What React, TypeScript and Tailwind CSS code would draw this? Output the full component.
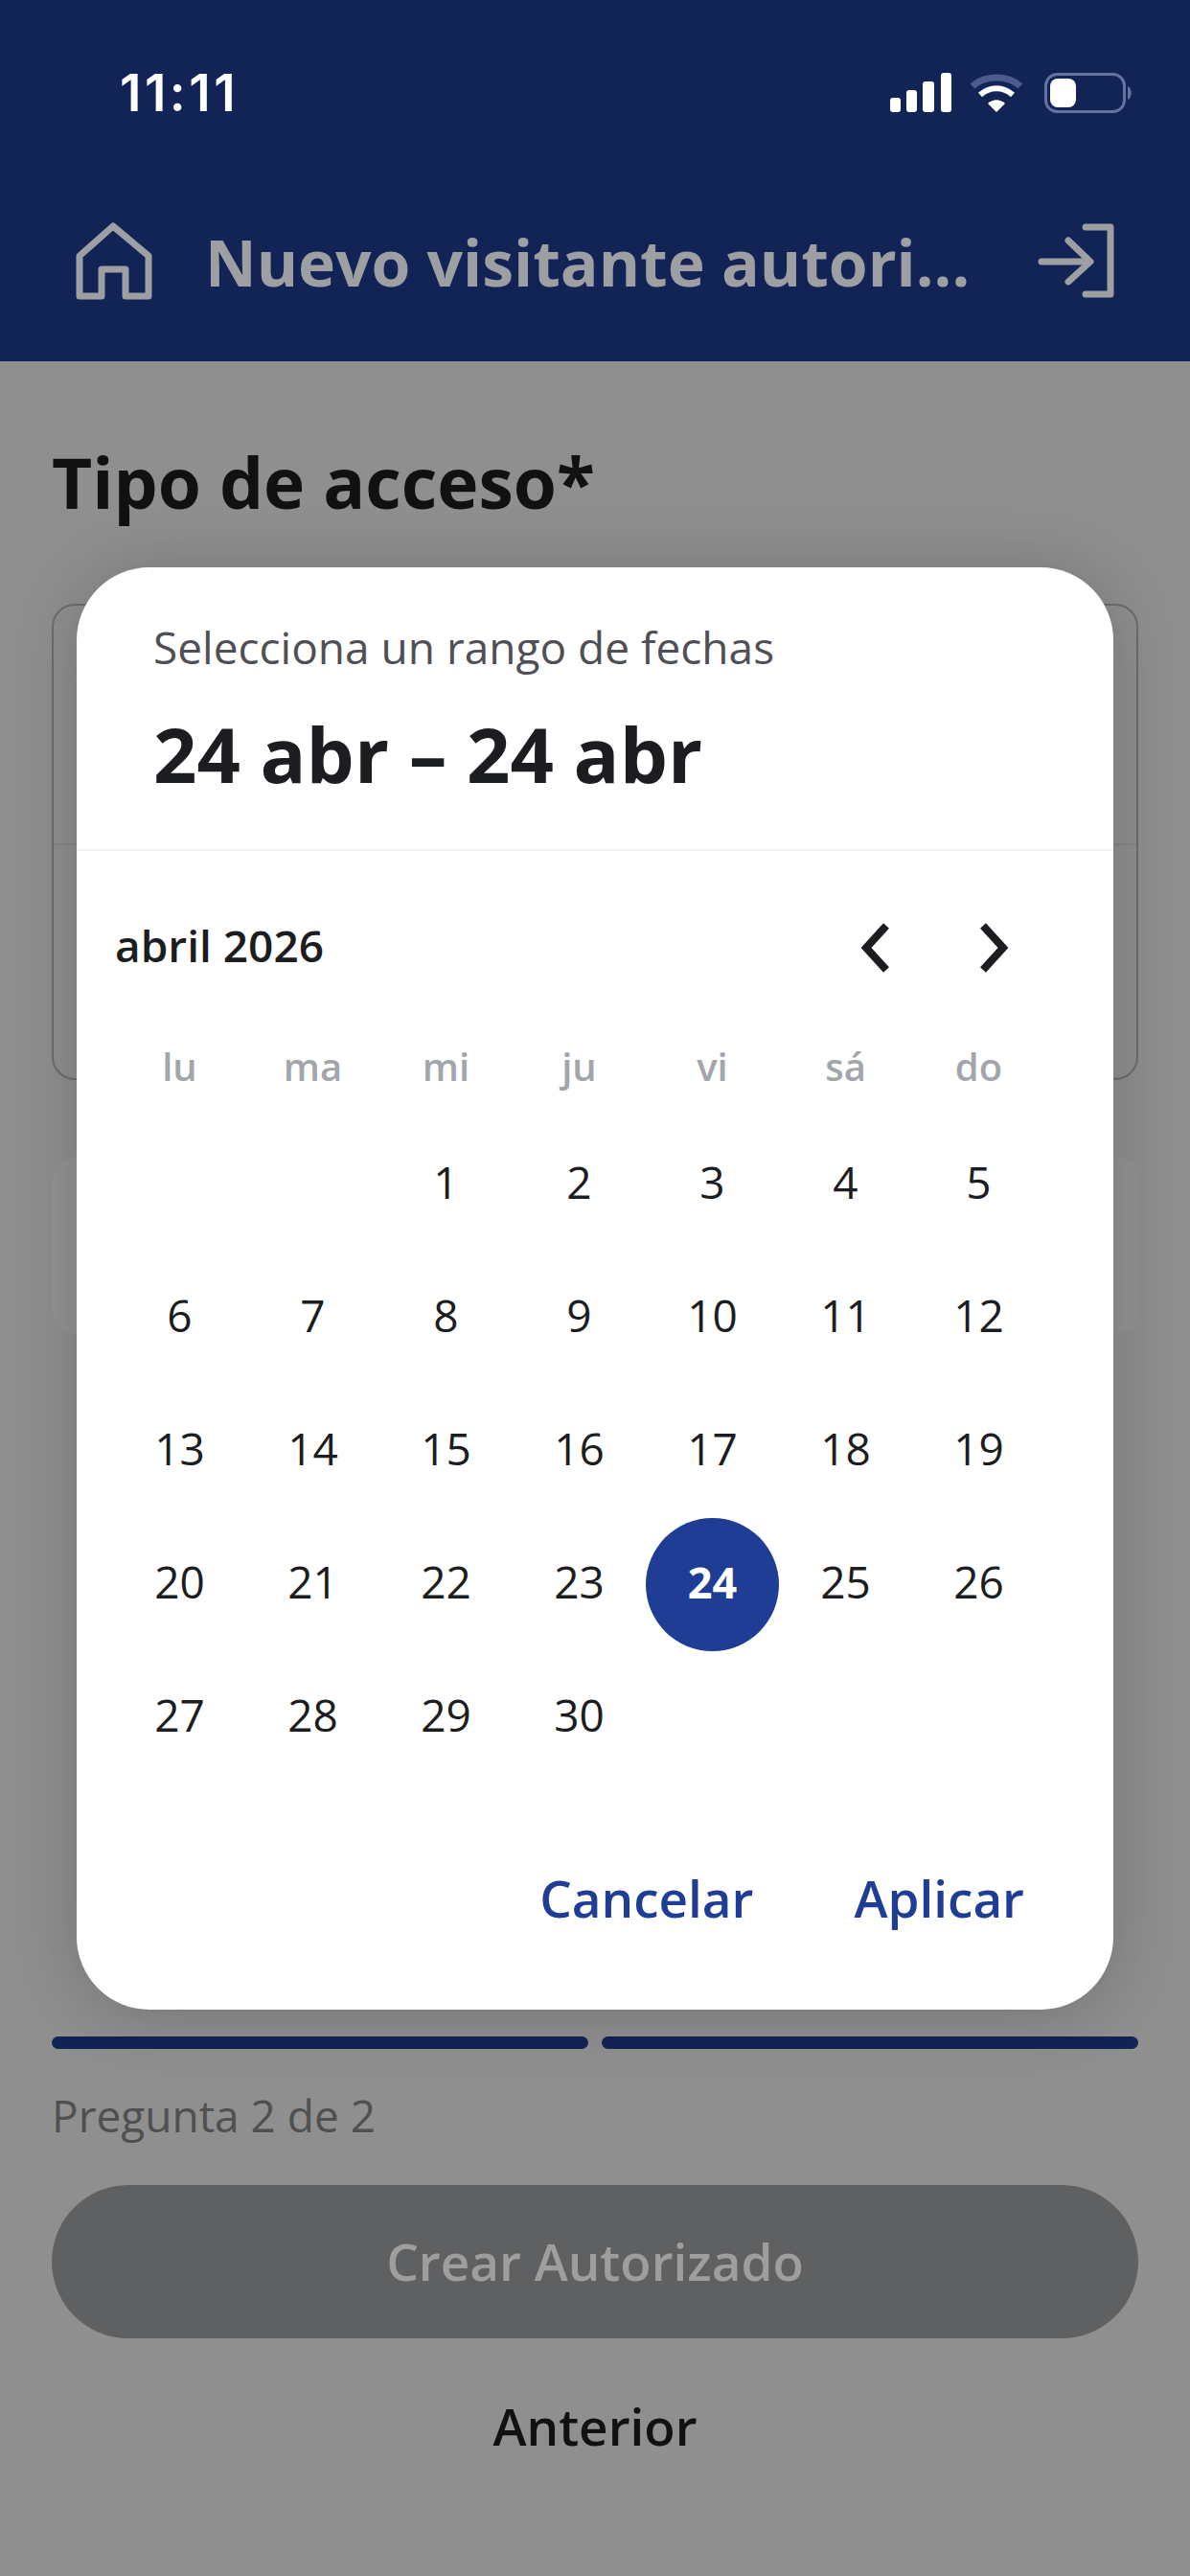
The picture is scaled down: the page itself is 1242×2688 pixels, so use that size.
const weekDays = ["lu", "ma", "mi", "ju", "vi", "sá", "do"];
const days: (number | null)[] = [null, null, ...Array.from({ length: 30 }, (_, i) => i + 1)];

function StatusIcons() {
  return (
    <div className="flex items-center">
      <svg width="66" height="42" viewBox="0 0 66 42" fill="white">
        <rect x="0" y="26" width="11" height="15" rx="3" />
        <rect x="17" y="18" width="11" height="23" rx="3" />
        <rect x="34" y="9" width="12" height="32" rx="3" />
        <rect x="53" y="0" width="11" height="41" rx="3" />
      </svg>
      <svg className="ml-[17px]" width="56" height="42" viewBox="0 0 56 42" fill="none">
        <path d="M3 14 C16 2 40 2 53 14" stroke="#4a5b8c" strokeWidth="7" />
        <path d="M11 23 C21 14 35 14 45 23" stroke="white" strokeWidth="6" />
        <path d="M19 32 L28 41 L37 32 C31 27 25 27 19 32 Z" fill="white" />
      </svg>
      <svg className="ml-[22px]" width="93" height="42" viewBox="0 0 93 42" fill="none">
        <rect x="1.5" y="1.5" width="82" height="39" rx="12" stroke="#6474a0" strokeWidth="3" />
        <rect x="6" y="6" width="27" height="30" rx="8" fill="white" />
        <path d="M87 14 C92 16 92 26 87 28 Z" fill="#6474a0" />
      </svg>
    </div>
  );
}

function HomeIcon() {
  return (
    <svg width="82" height="84" viewBox="0 0 82 84" fill="none" stroke="#9d9fa3" strokeWidth="7" strokeLinejoin="round">
      <path d="M40 5 L5 36 V78 H28 V50 H53 V78 H77 V36 Z" />
    </svg>
  );
}

function ExitIcon() {
  return (
    <svg width="84" height="84" viewBox="0 0 84 84" fill="none" stroke="#9d9fa3" strokeWidth="7" strokeLinecap="round" strokeLinejoin="round">
      <path d="M52 6 H78 V76 H52" />
      <path d="M6 42 H56" />
      <path d="M34 20 L57 42 L34 63" />
    </svg>
  );
}

function Chevron({ flip }: { flip?: boolean }) {
  return (
    <svg width="36" height="54" viewBox="0 0 36 54" fill="none" stroke="#1c1d20" strokeWidth="8" className={flip ? "rotate-180" : ""}>
      <path d="M29 4 L8 27 L29 50" />
    </svg>
  );
}

export default function App() {
  return (
    <div className="relative flex h-[2688px] w-[1242px] flex-col overflow-hidden bg-[#8f8f8f] font-['Open_Sans',sans-serif]">
      {/* header */}
      <div className="h-[377px] bg-[#122355] pt-[64px]">
        <div className="flex h-[66px] items-center justify-between pl-[125px] pr-[59px]">
          <span className="font-['Inter',sans-serif] text-[53px] leading-none font-semibold tracking-[3.5px] text-white">11:11</span>
          <StatusIcons />
        </div>
        <div className="mt-[101px] flex items-center pl-[78px] pr-[77px]">
          <HomeIcon />
          <span className="ml-[54px] flex-1 text-[66px] leading-[84px] font-bold whitespace-nowrap text-[#9d9fa3]">Nuevo visitante autori...</span>
          <ExitIcon />
        </div>
      </div>

      {/* formulario detras del modal */}
      <div className="flex flex-1 flex-col px-[54px]">
        <h1 className="mt-[78px] text-[73px] leading-[96px] font-bold text-[#111]">Tipo de acceso*</h1>
        <div className="mt-[79px] flex h-[497px] flex-col rounded-[24px] border-2 border-[#6d6d6d]">
          <div className="h-[250px] border-b-2 border-[#858585]" />
        </div>
        <div className="mt-[80px] h-[185px] rounded-[24px] bg-[#939393]" />
        <div className="mt-[733px] flex gap-[14px]">
          <div className="h-[13px] flex-1 rounded-full bg-[#122355]" />
          <div className="h-[13px] flex-1 rounded-full bg-[#122355]" />
        </div>
        <p className="mt-[37px] text-[46px] leading-[64px] text-[#505050]">Pregunta 2 de 2</p>
        <div className="mt-[41px] flex h-[160px] items-center justify-center rounded-full bg-[#5f6062]">
          <span className="text-[53px] font-semibold text-[#9e9e9e]">Crear Autorizado</span>
        </div>
        <p className="mt-[56px] text-center text-[53px] leading-[72px] font-semibold text-[#111]">Anterior</p>
      </div>

      {/* modal calendario */}
      <div className="absolute top-[592px] left-[80px] flex h-[1505px] w-[1082px] flex-col rounded-[76px] bg-white shadow-[0_4px_70px_rgba(0,0,0,0.2)]">
        <div className="h-[296px] border-b-2 border-[#f0f0f0] pl-[80px] pt-[52px]">
          <p className="text-[46px] leading-[62px] text-[#4f4f55]">Selecciona un rango de fechas</p>
          <p className="mt-[24px] text-[79.5px] leading-[112px] font-bold text-[#1c1d20]">24 abr – 24 abr</p>
        </div>
        <div className="flex items-center justify-between pl-[40px] pr-[107px] pt-[62px]">
          <span className="text-[46px] leading-[72px] font-semibold text-[#1c1d20]">abril 2026</span>
          <div className="flex translate-y-[3px] items-center gap-[87px]">
            <Chevron />
            <Chevron flip />
          </div>
        </div>
        <div className="mt-[63px] grid grid-cols-[repeat(7,139px)] pl-[38px]">
          {weekDays.map((d) => (
            <span key={d} className="text-center text-[40px] leading-[56px] font-semibold text-[#a2a5ab]">{d}</span>
          ))}
        </div>
        <div className="mt-[23px] grid grid-cols-[repeat(7,139px)] auto-rows-[139px] pl-[38px]">
          {days.map((d, i) => (
            <div key={i} className="flex items-center justify-center">
              {d === 24 ? (
                <span className="flex size-[139px] translate-y-[3px] items-center justify-center rounded-full bg-[#1f3d95] pb-[5px] text-[45px] font-bold text-white">{d}</span>
              ) : (
                <span className="text-[46px] text-[#1c1d20]">{d}</span>
              )}
            </div>
          ))}
        </div>
        <div className="mt-[85px] flex justify-end gap-[105px] pr-[93px]">
          <span className="text-[53px] leading-[74px] font-semibold text-[#1f3d95]">Cancelar</span>
          <span className="text-[53px] leading-[74px] font-semibold text-[#1f3d95]">Aplicar</span>
        </div>
      </div>
    </div>
  );
}
